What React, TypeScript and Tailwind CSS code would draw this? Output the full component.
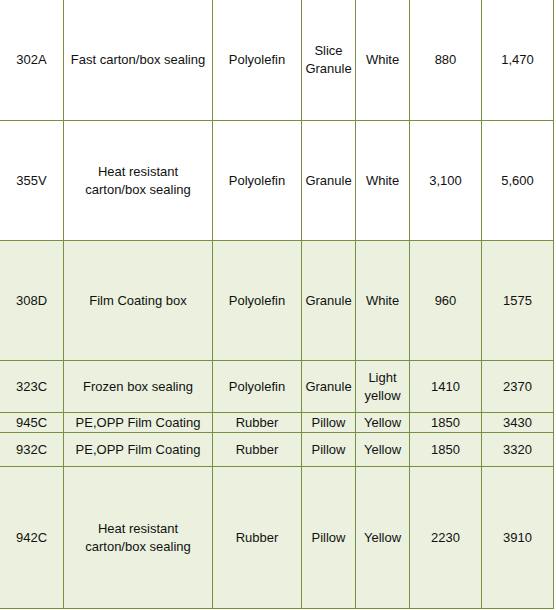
import React from "react";

type Row = { h: string; green: boolean; cells: string[][] };

const rows: Row[] = [
  { h: "h-[121px]", green: false, cells: [["302A"], ["Fast carton/box sealing"], ["Polyolefin"], ["Slice", "Granule"], ["White"], ["880"], ["1,470"]] },
  { h: "h-[120px]", green: false, cells: [["355V"], ["Heat resistant", "carton/box sealing"], ["Polyolefin"], ["Granule"], ["White"], ["3,100"], ["5,600"]] },
  { h: "h-[120px]", green: true, cells: [["308D"], ["Film Coating box"], ["Polyolefin"], ["Granule"], ["White"], ["960"], ["1575"]] },
  { h: "h-[52px]", green: true, cells: [["323C"], ["Frozen box sealing"], ["Polyolefin"], ["Granule"], ["Light", "yellow"], ["1410"], ["2370"]] },
  { h: "h-[20px]", green: true, cells: [["945C"], ["PE,OPP Film Coating"], ["Rubber"], ["Pillow"], ["Yellow"], ["1850"], ["3430"]] },
  { h: "h-[34px]", green: true, cells: [["932C"], ["PE,OPP Film Coating"], ["Rubber"], ["Pillow"], ["Yellow"], ["1850"], ["3320"]] },
  { h: "h-[142px]", green: true, cells: [["942C"], ["Heat resistant", "carton/box sealing"], ["Rubber"], ["Pillow"], ["Yellow"], ["2230"], ["3910"]] },
];

export default function App() {
  return (
    <div className="w-[556px] h-[610px] bg-white overflow-hidden" style={{ fontFamily: '"Liberation Sans", Arial, sans-serif' }}>
      <div className="grid grid-cols-[64px_149px_89px_54px_54px_72px_72px] w-[554px] text-[13px] leading-[18px] text-[#111]">
        {rows.map((r, i) =>
          r.cells.map((c, j) => (
            <div
              key={`${i}-${j}`}
              className={`${r.h} ${r.green ? "bg-[#ebf1de]" : "bg-white"} border-r border-b border-[#76923c] flex flex-col items-center justify-center text-center`}
            >
              {c.map((t, k) => (
                <span key={k} className="whitespace-nowrap">{t}</span>
              ))}
            </div>
          ))
        )}
      </div>
    </div>
  );
}
